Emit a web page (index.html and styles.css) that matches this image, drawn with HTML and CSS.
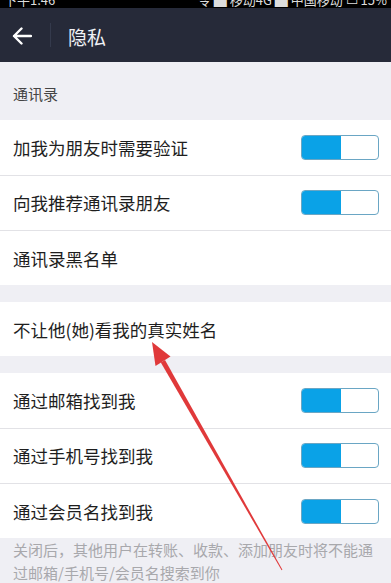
FILE: index.html
```html
<!DOCTYPE html>
<html lang="zh">
<head>
<meta charset="utf-8">
<link rel="stylesheet" href="styles.css">
</head>
<body>
<div class="screen">
  <div class="status">
    <span class="st-left">下午1:46</span>
    <span class="st-right">令 ▆ 移动4G ▆ 中国移动 ▭ 15%</span>
  </div>
  <div class="navbar">
    <div class="back">
      <svg width="20" height="18" viewBox="0 0 20 18"><path d="M19 9H2M9.5 1.5L2 9l7.5 7.5" fill="none" stroke="#fff" stroke-width="2.4" stroke-linecap="round" stroke-linejoin="round"/></svg>
    </div>
    <div class="nav-sep"></div>
    <div class="title">隐私</div>
  </div>
  <div class="sec-head">通讯录</div>
  <div class="group">
    <div class="row"><span class="label">加我为朋友时需要验证</span><span class="toggle"><span class="on"></span></span></div>
    <div class="row"><span class="label">向我推荐通讯录朋友</span><span class="toggle"><span class="on"></span></span></div>
    <div class="row last"><span class="label">通讯录黑名单</span></div>
  </div>
  <div class="gap"></div>
  <div class="group">
    <div class="row last"><span class="label">不让他(她)看我的真实姓名</span></div>
  </div>
  <div class="gap"></div>
  <div class="group">
    <div class="row"><span class="label">通过邮箱找到我</span><span class="toggle"><span class="on"></span></span></div>
    <div class="row"><span class="label">通过手机号找到我</span><span class="toggle"><span class="on"></span></span></div>
    <div class="row last"><span class="label">通过会员名找到我</span><span class="toggle"><span class="on"></span></span></div>
  </div>
  <div class="note">关闭后，其他用户在转账、收款、添加朋友时将不能通过邮箱/手机号/会员名搜索到你</div>
  <svg class="arrow" width="391" height="583" viewBox="0 0 391 583">
    <polygon points="152,342 170.5,356.5 155.5,366" fill="#e0393a"/>
    <polygon points="165,360 160.8,362.4 281.6,570.25 282.4,569.75" fill="#e0393a"/>
  </svg>
</div>
</body>
</html>
```
FILE: styles.css
```css
* { box-sizing: border-box; margin: 0; padding: 0; }
html, body { width: 391px; height: 583px; overflow: hidden; }
body {
  background: #efeff4;
  font-family: "Noto Sans CJK SC", "Noto Sans", sans-serif;
}
.screen { position: relative; width: 391px; height: 583px; overflow: hidden; background: #efeff4; }
.status {
  height: 8px;
  background: #000;
  color: #ddd;
  font-size: 13px;
  line-height: 13px;
  overflow: hidden;
  display: flex;
  justify-content: space-between;
  padding: 0 4px;
}
.st-left, .st-right { margin-top: -7px; white-space: nowrap; }
.navbar {
  height: 54px;
  background: #262a39;
  display: flex;
  align-items: center;
}
.back { width: 50px; display: flex; justify-content: center; padding-right: 6px; padding-top: 2px; }
.back svg { display: block; }
.nav-sep { width: 1px; height: 24px; background: #343a4c; }
.title { color: #eef0f4; font-size: 19px; margin-left: 17px; padding-top: 2px; }
.sec-head {
  height: 58px;
  display: flex;
  align-items: center;
  padding: 4px 13px 0;
  font-size: 15px;
  color: #444;
}
.group { background: #fff; }
.row {
  height: 55.5px;
  display: flex;
  align-items: center;
  justify-content: space-between;
  padding: 0 12px 0 13px;
  border-bottom: 1px solid #e2e2e6;
}
.row.last { border-bottom: none; height: 54px; }
.label { font-size: 17.5px; color: #1e1e1e; }
.toggle {
  width: 78px;
  height: 25px;
  border: 1px solid #6aa6c4;
  border-radius: 4px;
  background: #fff;
  overflow: hidden;
  display: flex;
}
.toggle .on { width: 39px; height: 100%; background: #0aa2e7; }
.gap { height: 17px; }
.note {
  padding: 0 13px 0;
  font-size: 15px;
  line-height: 23px;
  color: #a8a8ac;
}
.arrow { position: absolute; left: 0; top: 0; pointer-events: none; }
```
